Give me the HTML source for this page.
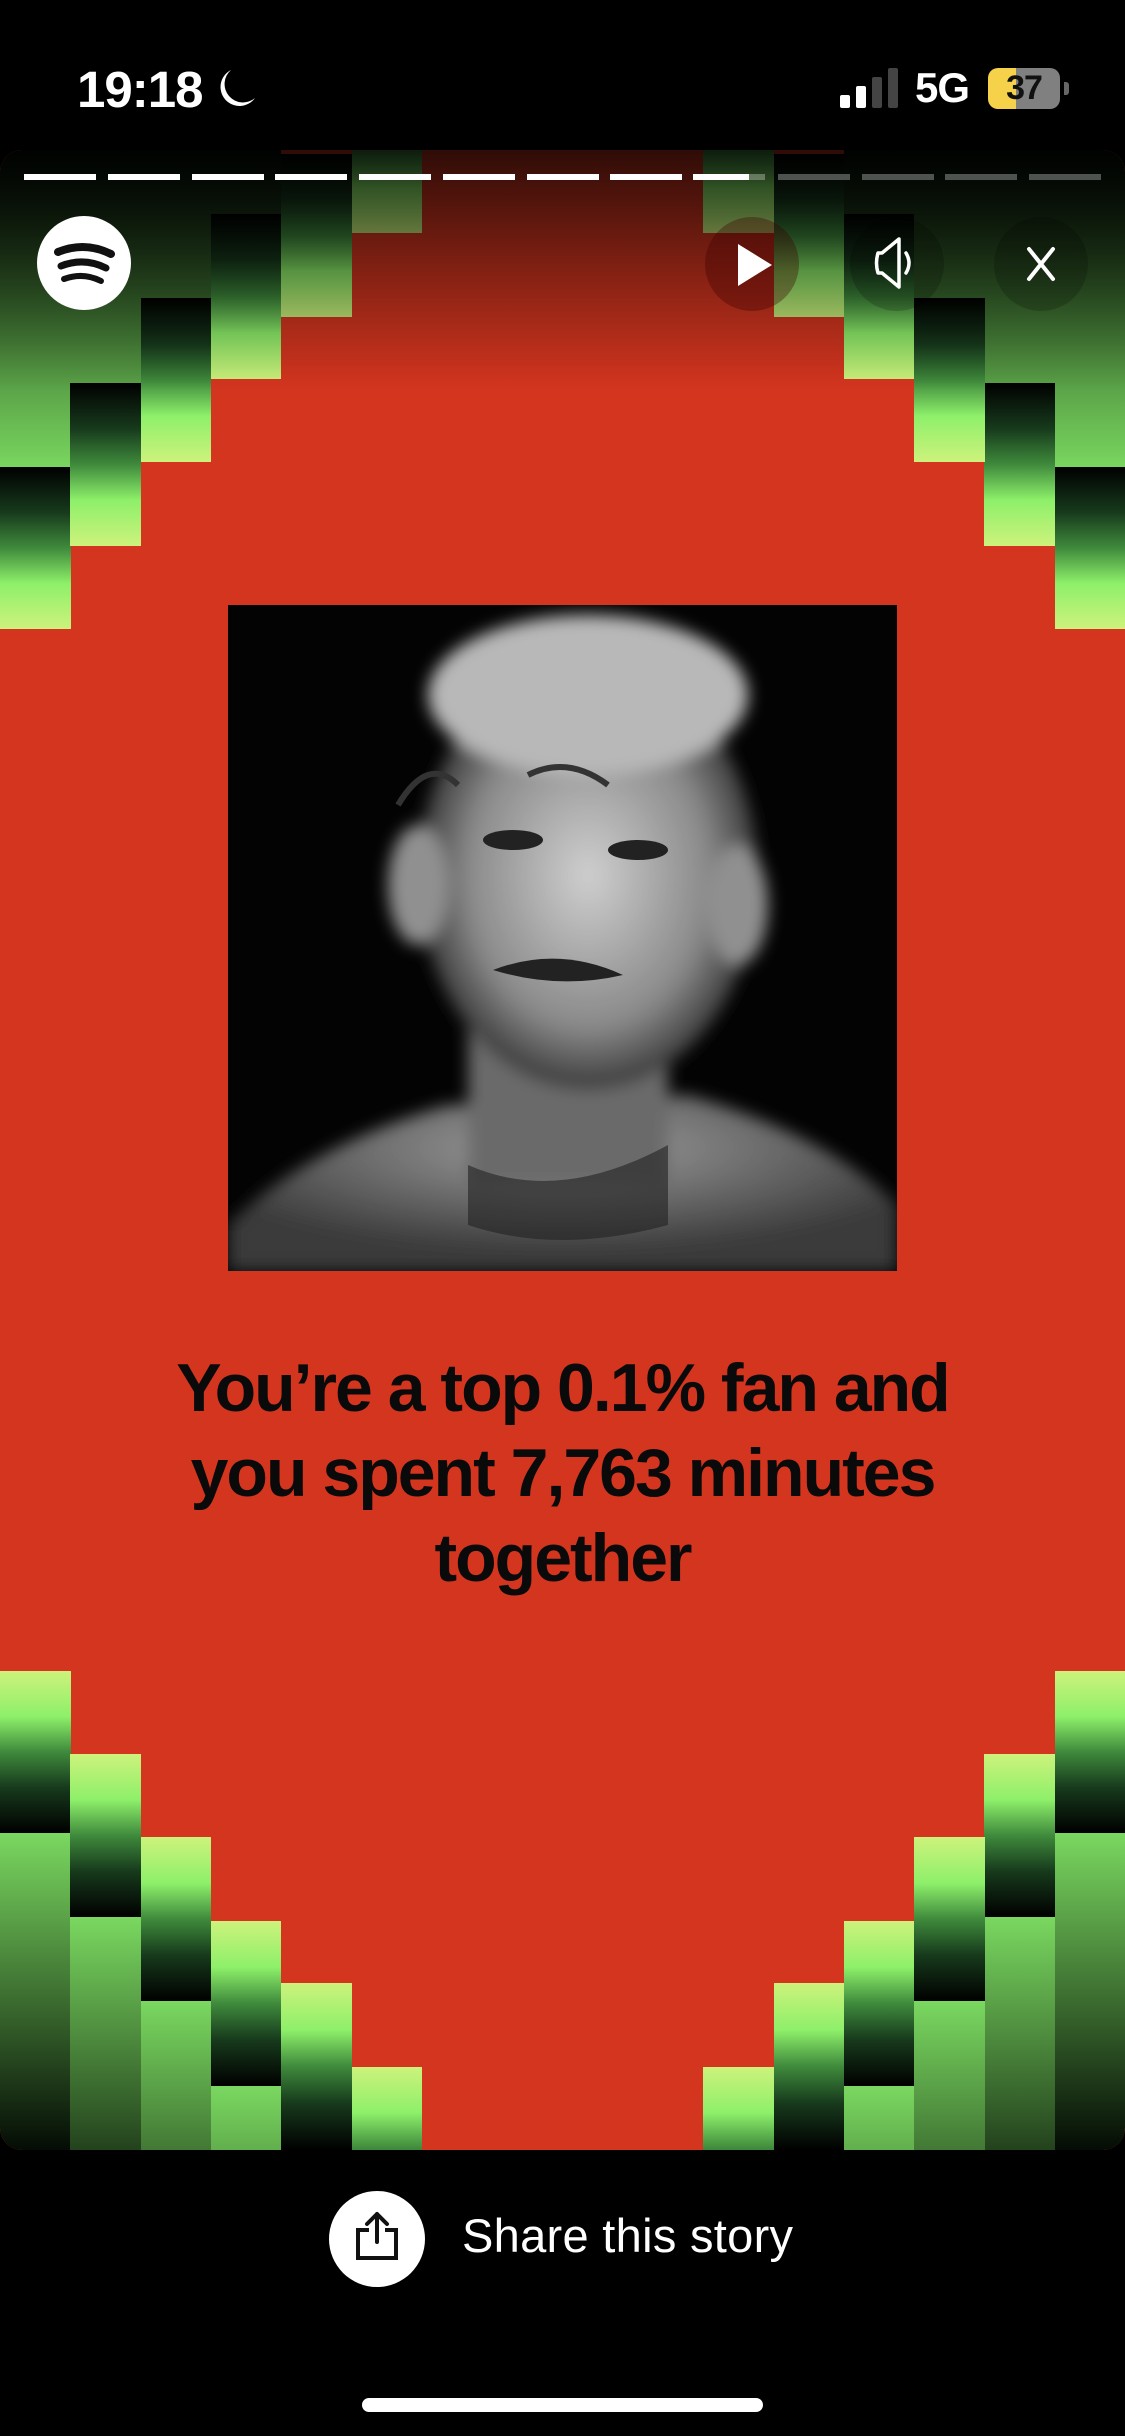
<!DOCTYPE html>
<html><head><meta charset="utf-8"><style>
*{margin:0;padding:0;box-sizing:border-box}
body{width:1125px;height:2436px;background:#000;position:relative;overflow:hidden;font-family:"Liberation Sans",sans-serif}
.card{position:absolute;left:0;top:150px;width:1125px;height:2000px;background:#d4351f;border-radius:22px;overflow:hidden}
.c{position:absolute;width:70.5px}
.bd{background:linear-gradient(#000 0%,#173a1c 28%,#3f8a3c 50%,#8ef06a 72%,#cdf27c 100%)}
.bu{background:linear-gradient(#cdf27c 0%,#8ef06a 28%,#3f8a3c 50%,#173a1c 72%,#000 100%)}
.ft{background:linear-gradient(#020a03,#7ad860);background-size:100% 320px;background-repeat:no-repeat;background-position:0 0}
.fb{background:linear-gradient(#7ad860,#030a04);background-size:100% 320px;background-repeat:no-repeat;background-position:0 0}
.ov{position:absolute;left:0;top:0;width:1125px;height:240px;background:linear-gradient(rgba(0,0,0,.78),rgba(0,0,0,0))}
.seg{position:absolute;top:24px;height:6px;width:72px;background:rgba(255,255,255,.3)}
.seg.w{background:#fff}
.btn{position:absolute;width:94px;height:94px;border-radius:50%;background:rgba(0,0,0,.18);top:67px}
.h{font-weight:bold;font-size:68px;letter-spacing:-2px;line-height:85px;text-align:center;color:#0a0a0a;position:absolute;left:0;width:1125px;top:1196px}
</style></head><body>
<div style="position:absolute;left:77px;top:60px;color:#fff;font-size:51px;font-weight:bold;letter-spacing:-1px">19:18</div>
<svg style="position:absolute;left:215px;top:68px" width="44" height="42" viewBox="0 0 44 42"><path d="M16 2 A19 19 0 1 0 40 30 A16 16 0 0 1 16 2Z" fill="#fff"/></svg>
<div style="position:absolute;left:840px;top:95px;width:10px;height:13px;background:#fff;border-radius:2px"></div>
<div style="position:absolute;left:856px;top:86px;width:10px;height:22px;background:#fff;border-radius:2px"></div>
<div style="position:absolute;left:872px;top:77px;width:10px;height:31px;background:#444;border-radius:2px"></div>
<div style="position:absolute;left:888px;top:68px;width:10px;height:40px;background:#444;border-radius:2px"></div>
<div style="position:absolute;left:915px;top:64px;color:#fff;font-size:42px;font-weight:bold;letter-spacing:-1px">5G</div>
<div style="position:absolute;left:988px;top:68px;width:72px;height:41px;border-radius:10px;background:linear-gradient(90deg,#f6d14a 0 39%,#808080 39%);color:#111;font-size:34px;font-weight:bold;text-align:center;line-height:41px;letter-spacing:-1px">37</div>
<div style="position:absolute;left:1064px;top:82px;width:5px;height:13px;background:#666;border-radius:0 3px 3px 0"></div>

<div class="card">
<div class="c ft" style="left:0;top:0;height:317px"></div><div class="c bd" style="left:0;top:317px;height:162px"></div>
<div class="c ft" style="left:70.3px;top:0;height:233px"></div><div class="c bd" style="left:70.3px;top:233px;height:163px"></div>
<div class="c ft" style="left:140.6px;top:0;height:148px"></div><div class="c bd" style="left:140.6px;top:148px;height:164px"></div>
<div class="c ft" style="left:210.9px;top:0;height:64px"></div><div class="c bd" style="left:210.9px;top:64px;height:165px"></div>
<div class="c bd" style="left:281.2px;top:4px;height:163px"></div>
<div class="c bd" style="left:351.5px;top:-80px;height:163px"></div>
<div class="c ft" style="left:1054.7px;top:0;height:317px"></div><div class="c bd" style="left:1054.7px;top:317px;height:162px"></div>
<div class="c ft" style="left:984.4px;top:0;height:233px"></div><div class="c bd" style="left:984.4px;top:233px;height:163px"></div>
<div class="c ft" style="left:914.1px;top:0;height:148px"></div><div class="c bd" style="left:914.1px;top:148px;height:164px"></div>
<div class="c ft" style="left:843.8px;top:0;height:64px"></div><div class="c bd" style="left:843.8px;top:64px;height:165px"></div>
<div class="c bd" style="left:773.5px;top:4px;height:163px"></div>
<div class="c bd" style="left:703.1px;top:-80px;height:163px"></div>
<div class="c bu" style="left:0;top:1521px;height:162px"></div><div class="c fb" style="left:0;top:1683px;height:317px"></div>
<div class="c bu" style="left:70.3px;top:1604px;height:163px"></div><div class="c fb" style="left:70.3px;top:1767px;height:233px"></div>
<div class="c bu" style="left:140.6px;top:1687px;height:164px"></div><div class="c fb" style="left:140.6px;top:1851px;height:149px"></div>
<div class="c bu" style="left:210.9px;top:1771px;height:165px"></div><div class="c fb" style="left:210.9px;top:1936px;height:64px"></div>
<div class="c bu" style="left:281.2px;top:1833px;height:167px"></div>
<div class="c bu" style="left:351.5px;top:1917px;height:163px"></div>
<div class="c bu" style="left:1054.7px;top:1521px;height:162px"></div><div class="c fb" style="left:1054.7px;top:1683px;height:317px"></div>
<div class="c bu" style="left:984.4px;top:1604px;height:163px"></div><div class="c fb" style="left:984.4px;top:1767px;height:233px"></div>
<div class="c bu" style="left:914.1px;top:1687px;height:164px"></div><div class="c fb" style="left:914.1px;top:1851px;height:149px"></div>
<div class="c bu" style="left:843.8px;top:1771px;height:165px"></div><div class="c fb" style="left:843.8px;top:1936px;height:64px"></div>
<div class="c bu" style="left:773.5px;top:1833px;height:167px"></div>
<div class="c bu" style="left:703.1px;top:1917px;height:163px"></div>
<div class="ov"></div>

<div class="seg w" style="left:24px"></div><div class="seg w" style="left:108px"></div><div class="seg w" style="left:192px"></div><div class="seg w" style="left:275px"></div><div class="seg w" style="left:359px"></div><div class="seg w" style="left:443px"></div><div class="seg w" style="left:527px"></div><div class="seg w" style="left:610px"></div>
<div class="seg" style="left:693px;background:linear-gradient(90deg,#fff 0 78%,rgba(255,255,255,.3) 78%)"></div>
<div class="seg" style="left:778px"></div><div class="seg" style="left:862px"></div><div class="seg" style="left:945px"></div><div class="seg" style="left:1029px"></div>

<svg style="position:absolute;left:37px;top:66px" width="94" height="94" viewBox="0 0 94 94"><circle cx="47" cy="47" r="47" fill="#fff"/><g fill="none" stroke="#111" stroke-linecap="round"><path d="M21 36 Q48 25 74 38" stroke-width="8"/><path d="M24 50 Q47 41 69 52" stroke-width="7"/><path d="M27 63 Q46 56 64 65" stroke-width="6"/></g></svg>
<div class="btn" style="left:705px;background:rgba(60,0,0,.35)"></div>
<svg style="position:absolute;left:735px;top:92px" width="40" height="46" viewBox="0 0 40 46"><path d="M3 2 L37 23 L3 44Z" fill="#fff"/></svg>
<div class="btn" style="left:850px"></div>
<svg style="position:absolute;left:870px;top:85px" width="54" height="56" viewBox="0 0 54 56"><path d="M29 4 L12 18 H8 Q5 28 8 38 H12 L29 52 Z" fill="none" stroke="#fff" stroke-width="3.5" stroke-linejoin="round"/><path d="M36 18 Q42 28 36 38" fill="none" stroke="#fff" stroke-width="3.5" stroke-linecap="round"/></svg>
<div class="btn" style="left:994px"></div>
<svg style="position:absolute;left:1021px;top:93px" width="40" height="42" viewBox="0 0 40 42"><path d="M8 6 L32 36 M32 6 L8 36" stroke="#fff" stroke-width="4" stroke-linecap="round"/></svg>

<svg style="position:absolute;left:228px;top:455px" width="669" height="666" viewBox="0 0 669 666">
<defs>
<radialGradient id="f" cx="50%" cy="50%" r="50%"><stop offset="0" stop-color="#cfcfcf"/><stop offset=".7" stop-color="#8a8a8a"/><stop offset="1" stop-color="#3a3a3a"/></radialGradient>
<radialGradient id="s" cx="50%" cy="30%" r="60%"><stop offset="0" stop-color="#a0a0a0"/><stop offset="1" stop-color="#3a3a3a"/></radialGradient>
<filter id="b"><feGaussianBlur stdDeviation="8"/></filter>
</defs>
<rect width="669" height="666" fill="#030303"/>
<g filter="url(#b)">
<path d="M0 620 Q80 540 220 500 L460 490 Q600 530 669 600 L669 666 L0 666Z" fill="url(#s)"/>
<rect x="240" y="380" width="200" height="200" fill="#6a6a6a"/>
<ellipse cx="360" cy="270" rx="170" ry="215" fill="url(#f)"/>
<ellipse cx="360" cy="90" rx="160" ry="80" fill="#b8b8b8"/>
<ellipse cx="190" cy="280" rx="30" ry="60" fill="#909090"/>
<ellipse cx="510" cy="300" rx="30" ry="60" fill="#909090"/>
</g>
<g fill="#222"><ellipse cx="285" cy="235" rx="30" ry="10"/><ellipse cx="410" cy="245" rx="30" ry="10"/><path d="M265 365 Q330 340 395 370 Q330 385 265 365Z"/><path d="M240 560 Q330 600 440 540 L440 620 Q330 650 240 620Z" opacity=".6"/></g>
<path d="M170 200 Q200 150 230 180 M300 170 Q340 150 380 180" stroke="#333" stroke-width="6" fill="none"/>
</svg>

<div class="h">You’re a top 0.1% fan and<br>you spent 7,763 minutes<br>together</div>
</div>

<div style="position:absolute;left:329px;top:2191px;width:96px;height:96px;border-radius:50%;background:#fff"></div>
<svg style="position:absolute;left:353px;top:2210px" width="48" height="56" viewBox="0 0 48 56"><path d="M24 4 V32 M14 14 L24 4 L34 14" fill="none" stroke="#111" stroke-width="4" stroke-linecap="round" stroke-linejoin="round"/><path d="M16 20 H5 V48 H43 V20 H32" fill="none" stroke="#111" stroke-width="4"/></svg>
<div style="position:absolute;left:462px;top:2208px;color:#fff;font-size:47px;letter-spacing:0.3px">Share this story</div>
<div style="position:absolute;left:362px;top:2398px;width:401px;height:14px;border-radius:7px;background:#fff"></div>
</body></html>
